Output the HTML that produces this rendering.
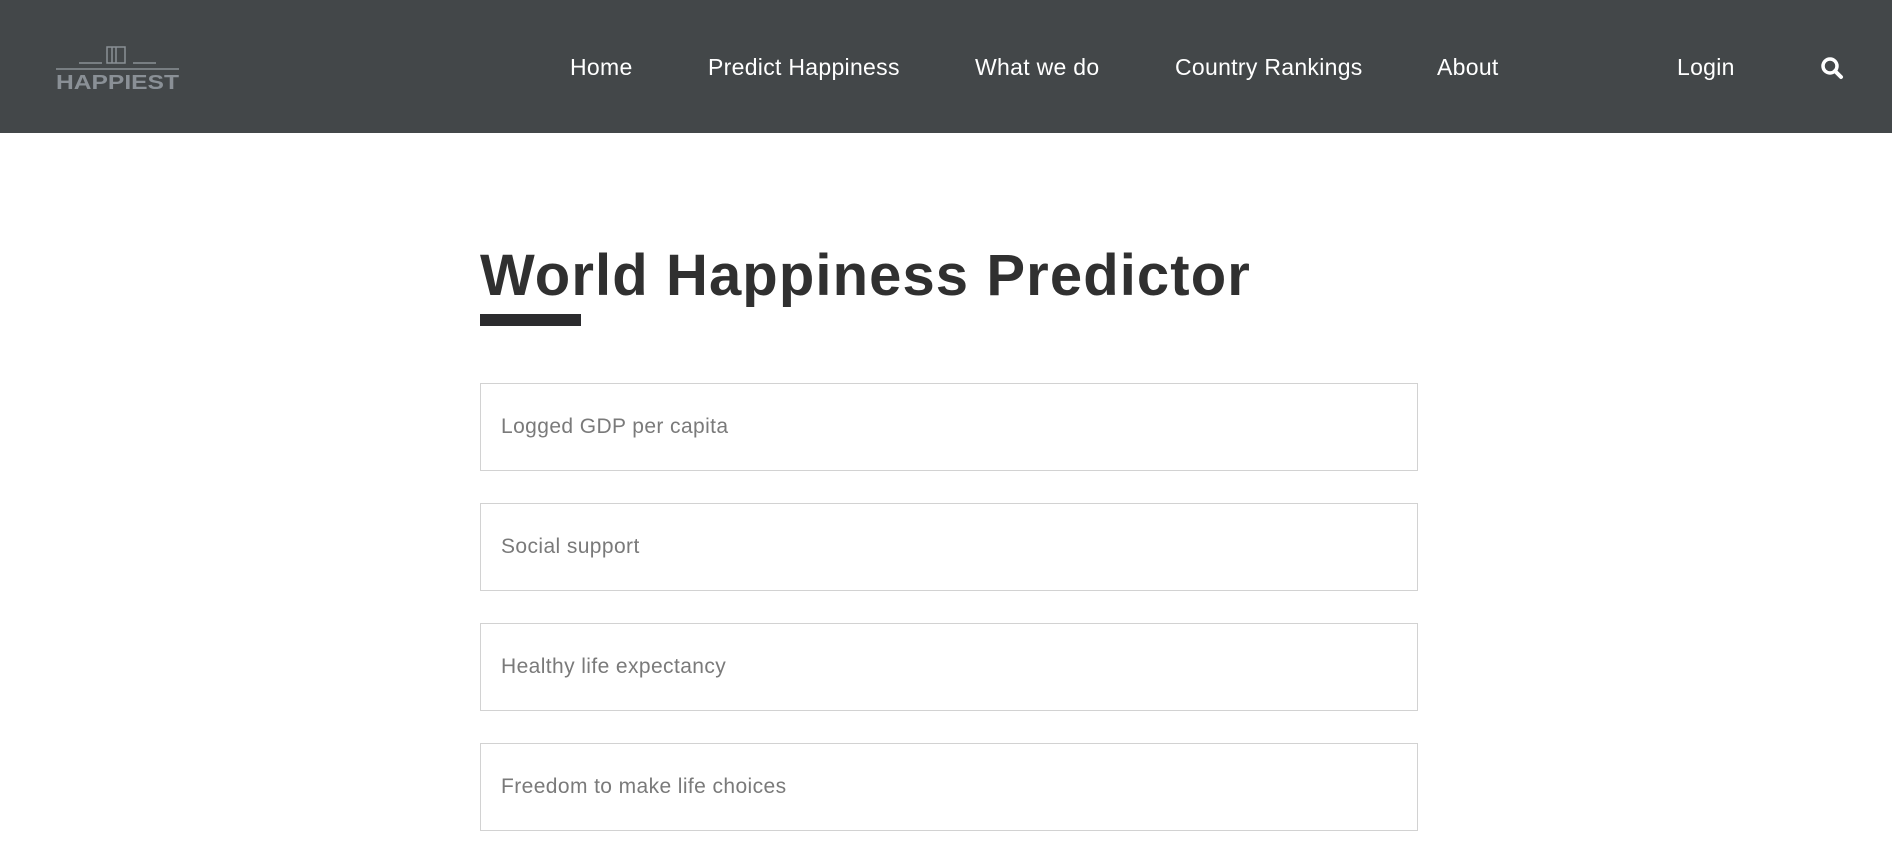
<!DOCTYPE html>
<html><head><style>
*{margin:0;padding:0;box-sizing:border-box}
body{width:1892px;height:863px;background:#fff;font-family:"Liberation Sans",sans-serif;position:relative;overflow:hidden}
.hdr{position:absolute;left:0;top:0;width:1892px;height:133px;background:#434749}
.nav{position:absolute;top:52px;color:#fff;font-size:23px;line-height:30px;letter-spacing:0.3px}
.logo{position:absolute;left:55px;top:46px}
h1{position:absolute;left:480px;top:236px;font-size:58px;line-height:80px;color:#303030;font-weight:bold;letter-spacing:1.1px}
.ul{position:absolute;left:480px;top:314px;width:101px;height:12px;background:#2b2b2e}
.box{position:absolute;left:480px;width:938px;height:88px;border:1px solid #d2d2d2}
.box span{position:absolute;left:20px;top:31px;font-size:21px;color:#7a7a7a;letter-spacing:0.4px}
</style></head><body>
<div class="hdr">
<svg class="logo" width="126" height="44" viewBox="0 0 126 44">
<g stroke="#8a9096" fill="none" stroke-width="1.5">
<line x1="24" y1="17" x2="47" y2="17"/><line x1="78" y1="17" x2="101" y2="17"/>
<rect x="52" y="1" width="18" height="16"/><line x1="57" y1="1" x2="57" y2="17"/><line x1="61" y1="1" x2="61" y2="17"/>
<line x1="1" y1="23" x2="124" y2="23"/>
</g>
<text x="1" y="43" textLength="123" lengthAdjust="spacingAndGlyphs" font-family="Liberation Sans" font-weight="bold" font-size="20" fill="#8a9096">HAPPIEST</text>
</svg>
<div class="nav" style="left:570px">Home</div>
<div class="nav" style="left:708px">Predict Happiness</div>
<div class="nav" style="left:975px">What we do</div>
<div class="nav" style="left:1175px">Country Rankings</div>
<div class="nav" style="left:1437px">About</div>
<div class="nav" style="left:1677px">Login</div>
<svg style="position:absolute;left:1820px;top:56px" width="24" height="24" viewBox="0 0 24 24"><circle cx="10" cy="10" r="7" stroke="#fff" stroke-width="3.5" fill="none"/><line x1="15" y1="15" x2="21" y2="21" stroke="#fff" stroke-width="4" stroke-linecap="round"/></svg>
</div>
<h1>World Happiness Predictor</h1>
<div class="ul"></div>
<div class="box" style="top:383px"><span>Logged GDP per capita</span></div>
<div class="box" style="top:503px"><span>Social support</span></div>
<div class="box" style="top:623px"><span>Healthy life expectancy</span></div>
<div class="box" style="top:743px"><span>Freedom to make life choices</span></div>
</body></html>
